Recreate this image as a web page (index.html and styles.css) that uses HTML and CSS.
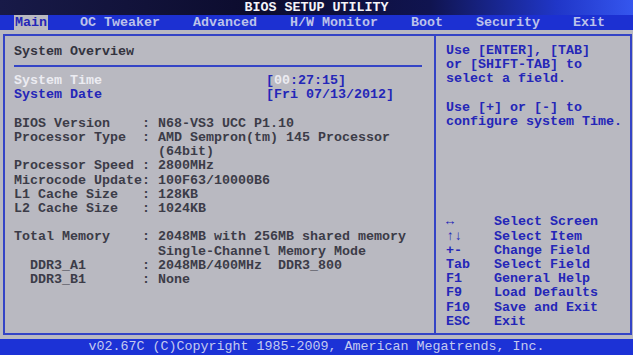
FILE: index.html
```html
<!DOCTYPE html>
<html lang="en">
<head>
  <meta charset="UTF-8">
  <title>BIOS SETUP UTILITY</title>
  <link rel="stylesheet" href="styles.css">
</head>
<body>
  <div class="screen">
    <header class="title">BIOS SETUP UTILITY</header>

    <!-- top menu -->
    <nav class="menu">
      <span class="tab active">Main</span>
      <span class="tab">OC Tweaker</span>
      <span class="tab">Advanced</span>
      <span class="tab">H/W Monitor</span>
      <span class="tab">Boot</span>
      <span class="tab">Security</span>
      <span class="tab">Exit</span>
    </nav>

    <main class="frame">
      <section class="overview">
        <h1>System Overview</h1>

        <div class="fields">
          <div class="field selected">
            <span class="name">System Time</span>
            <span class="val">[<em>00</em>:27:15]</span>
          </div>
          <div class="field">
            <span class="name">System Date</span>
            <span class="val">[Fri 07/13/2012]</span>
          </div>
        </div>

        <div class="info">
          <span>BIOS Version</span><span>:</span><span>N68-VS3 UCC P1.10</span>
          <span>Processor Type</span><span>:</span><span>AMD Sempron(tm) 145 Processor</span>
          <span></span><span></span><span>(64bit)</span>
          <span>Processor Speed</span><span>:</span><span>2800MHz</span>
          <span>Microcode Update</span><span>:</span><span>100F63/10000B6</span>
          <span>L1 Cache Size</span><span>:</span><span>128KB</span>
          <span>L2 Cache Size</span><span>:</span><span>1024KB</span>
        </div>

        <div class="info">
          <span>Total Memory</span><span>:</span><span>2048MB with 256MB shared memory</span>
          <span></span><span></span><span>Single-Channel Memory Mode</span>
          <span class="sub">DDR3_A1</span><span>:</span><span>2048MB/400MHz&nbsp;&nbsp;DDR3_800</span>
          <span class="sub">DDR3_B1</span><span>:</span><span>None</span>
        </div>
      </section>

      <aside class="help">
        <p>Use [ENTER], [TAB]<br>or [SHIFT-TAB] to<br>select a field.</p>
        <p>Use [+] or [-] to<br>configure system Time.</p>

        <div class="keys">
          <span>&harr;</span><span>Select Screen</span>
          <span>&uarr;&darr;</span><span>Select Item</span>
          <span>+-</span><span>Change Field</span>
          <span>Tab</span><span>Select Field</span>
          <span>F1</span><span>General Help</span>
          <span>F9</span><span>Load Defaults</span>
          <span>F10</span><span>Save and Exit</span>
          <span>ESC</span><span>Exit</span>
        </div>
      </aside>
    </main>

    <footer class="footer">v02.67C (C)Copyright 1985-2009, American Megatrends, Inc.</footer>
  </div>
</body>
</html>
```

FILE: styles.css
```css
body {
  margin: 0;
  background-color: #b9b9c1;
  font-family: "Liberation Mono", "DejaVu Sans Mono", monospace;
  font-size: 13.33px;
  font-weight: bold;
  line-height: 14.2px;
  color: #3c3c48;
}

.screen {
  width: 633px;
  height: 355px;
  display: flex;
  flex-direction: column;
  overflow: hidden;
}

.title {
  height: 15px;
  line-height: 15px;
  text-align: center;
  color: #f4f4f8;
  background: linear-gradient(to right, #181a48 0%, #0c0c2e 40%, #101450 68%, #2036c8 88%, #3556ee 100%);
}

.menu {
  height: 15px;
  line-height: 16px;
  display: flex;
  gap: 31px;
  padding-left: 14px;
  background-color: #1c30d2;
}

.tab {
  color: #bcc2ea;
  padding: 0 1px;
}

.tab.active {
  background-color: #b9b9c1;
  color: #2426b8;
}

/* main frame */
.frame {
  margin: 4px 1px 4px 3px;
  height: 301px;
  box-sizing: border-box;
  border: 2px solid #3444c6;
  display: flex;
}

.overview {
  width: 408px;
  padding: 9px 12px 0 9px;
  border-right: 2px solid #3444c6;
}

h1 {
  font-size: inherit;
  margin: 0;
  padding-bottom: 6px;
  border-bottom: 2px solid #3444c6;
  color: #33333e;
}

.fields {
  margin-top: 7px;
}

.field {
  display: grid;
  grid-template-columns: 252px auto;
  color: #2426b8;
}

.field.selected .name {
  color: #ececf2;
}

.field em {
  font-style: normal;
  color: #ececf2;
}

.info {
  display: grid;
  grid-template-columns: 16ch 2ch auto;
  margin-top: 14.2px;
  white-space: pre;
}

.info .sub {
  padding-left: 2ch;
}

.help {
  flex: 1;
  padding: 8px 6px 4px 10px;
  display: flex;
  flex-direction: column;
  color: #2426b8;
}

.help p {
  margin: 0 0 14.2px 0;
}

.keys {
  margin-top: auto;
  display: grid;
  grid-template-columns: 6ch auto;
}

.footer {
  height: 16px;
  line-height: 16px;
  text-align: center;
  color: #c4cbf0;
  background-color: #1c32d6;
  font-weight: normal;
}
```
